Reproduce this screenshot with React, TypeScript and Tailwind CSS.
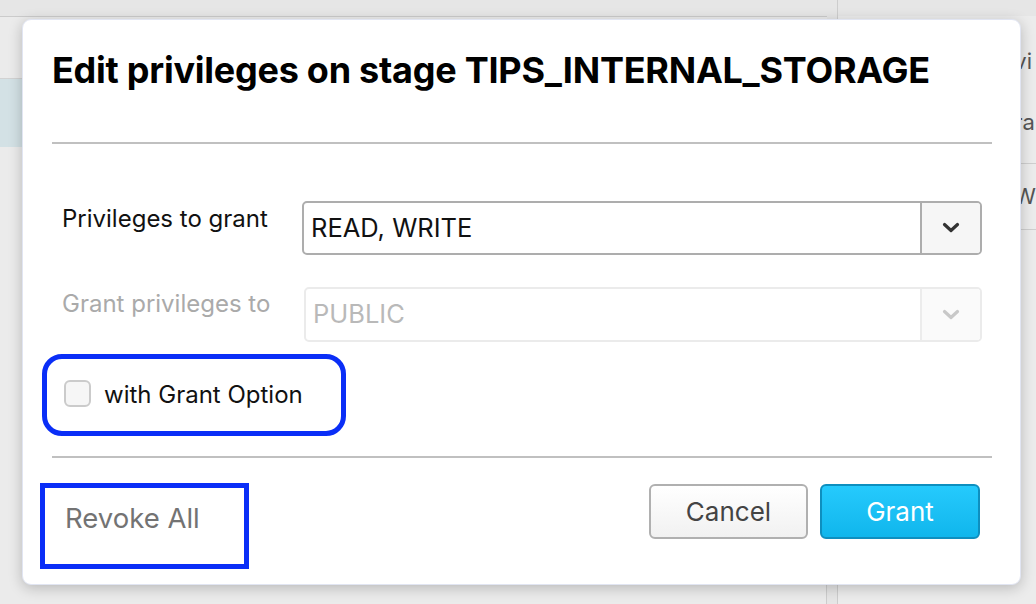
import React from "react";

function Chevron({ color }: { color: string }) {
  return (
    <svg width="18" height="12" viewBox="0 0 18 12" fill="none">
      <path d="M2.5 2.5 L9 8.5 L15.5 2.5" stroke={color} strokeWidth="3.2" strokeLinecap="round" strokeLinejoin="round" />
    </svg>
  );
}

export default function App() {
  return (
    <div
      className="relative w-[1036px] h-[604px] overflow-hidden bg-[#e9e9e9] flex"
      style={{ fontFamily: "Inter, 'Noto Sans', sans-serif" }}
    >
      {/* background: left main area */}
      <div className="w-[832px] h-full flex flex-col bg-[#ebebeb]">
        <div className="h-[17px] border-b border-[#cbcbcb] bg-[#e6e6e6]" />
        <div className="h-[62px] border-b border-[#d2d2d2]" />
        <div className="h-[68px] bg-[#d3e1e5]" />
        <div className="flex-1 border-r border-[#cdcdcd]" />
      </div>
      <div className="w-[11px] h-full bg-[#e6e6e6] border-r border-[#cdcdcd]" />
      {/* background: right panel */}
      <div className="flex-1 h-full bg-[#ececec] flex flex-col text-[22px] text-[#555]">
        <div className="h-[16px] bg-[#e6e6e6]" />
        <div className="h-[78px] pl-[176px] pt-[30px] leading-[30px]">vi</div>
        <div className="h-[70px] pl-[176px] pt-[13px] leading-[30px] border-b border-[#cfcfcf]">ra</div>
        <div className="h-[66px] pl-[176px] pt-[17px] leading-[30px] border-b border-[#cfcfcf]">W</div>
        <div className="flex-1" />
      </div>

      {/* modal dialog */}
      <div className="absolute left-[22px] top-[19px] w-[999px] h-[566px] bg-white rounded-[9px] border border-[#e1e5f2] shadow-[0_3px_14px_rgba(0,0,0,0.22)] flex flex-col pl-[29px] pr-[28px]">
        <div className="pt-[28px] h-[122px] text-[36px] leading-[44px] font-bold text-black tracking-[-0.25px]">
          Edit privileges on stage TIPS_INTERNAL_STORAGE
        </div>
        <div className="h-[2px] bg-[#c0c0c0]" />

        <div className="pt-[57px] pl-[10px] pr-[10px] flex flex-col">
          <div className="flex items-start">
            <div className="w-[240px] pt-[3px] text-[24px] leading-[30px] text-[#111]">Privileges to grant</div>
            <div className="flex-1 flex h-[54px] border-2 border-[#adadad] rounded-[5px] overflow-hidden">
              <div className="flex-1 flex items-center pl-[7px] text-[25.5px] text-[#111]">READ, WRITE</div>
              <div className="w-[60px] flex items-center justify-center border-l-2 border-[#adadad] bg-[#f6f6f6]">
                <Chevron color="#333" />
              </div>
            </div>
          </div>

          <div className="flex items-start mt-[32px]">
            <div className="w-[242px] pt-[2px] text-[24px] leading-[30px] text-[#aaaaaa]">Grant privileges to</div>
            <div className="flex-1 flex h-[55px] border-2 border-[#ebebeb] rounded-[5px] overflow-hidden">
              <div className="flex-1 flex items-center pl-[7px] text-[25.5px] text-[#b9b9b9]">PUBLIC</div>
              <div className="w-[60px] flex items-center justify-center border-l-2 border-[#ececec] bg-[#fafafa]">
                <Chevron color="#c8c8c8" />
              </div>
            </div>
          </div>

          <div className="flex items-start mt-[38px] h-[27px] pl-[2px]">
            <div className="w-[27px] h-[27px] rounded-[6px] border-2 border-[#cbcbcb] bg-[#f6f6f6]" />
            <div className="ml-[13px] text-[24px] leading-[30px] text-[#111]">with Grant Option</div>
          </div>
        </div>

        <div className="mt-[49px] h-[2px] bg-[#c0c0c0]" />

        <div className="flex items-start pt-[26px]">
          <div className="pl-[13px] pt-[17px] text-[27.5px] leading-[34px] text-[#737373]">Revoke All</div>
          <div className="flex-1" />
          <button className="w-[159px] h-[55px] rounded-[6px] border-2 border-[#b0b0b0] bg-gradient-to-b from-white to-[#f1f1f1] text-[26px] text-[#444]">
            Cancel
          </button>
          <button className="ml-[12px] mr-[12px] w-[160px] h-[55px] rounded-[6px] border-2 border-[#0e8fbf] bg-gradient-to-b from-[#25cafd] to-[#0fb6ec] text-[26px] text-white">
            Grant
          </button>
        </div>
      </div>

      {/* annotations */}
      <div className="absolute left-[42px] top-[354px] w-[304px] h-[82px] rounded-[20px] border-[5px] border-[#0a2ef7]" />
      <div className="absolute left-[40px] top-[483px] w-[209px] h-[86px] border-[5px] border-[#0a2ef7]" />
    </div>
  );
}
